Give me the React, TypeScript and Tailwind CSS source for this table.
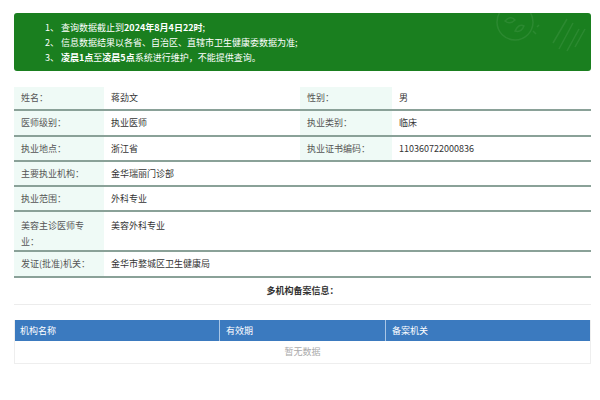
import React from "react";

const FONT = { fontFamily: '"Noto Sans CJK SC", "Noto Sans", sans-serif' };

function Label({ children, className = "" }: { children: React.ReactNode; className?: string }) {
  return (
    <div className={`bg-[#effaf6] text-[#555] px-[7px] ${className}`}>{children}</div>
  );
}

export default function App() {
  const rowCls = "flex border-b-2 border-[#8aa198] text-[9px] leading-[16px]";
  return (
    <div className="w-[600px] h-[400px] bg-white overflow-hidden" style={FONT}>
      <div className="pt-[13px] pl-[14px] w-[591px]">
        {/* Banner */}
        <div className="relative h-[58px] rounded-[3px] bg-[#1a7f1f] text-white text-[9px] leading-[15px] pl-[31px] pt-[7px] overflow-hidden">
          <div>1、 查询数据截止到<span className="font-bold">2024年8月4日22时</span>;</div>
          <div>2、 信息数据结果以各省、自治区、直辖市卫生健康委数据为准;</div>
          <div>
            3、 <span className="font-bold">凌晨1点</span>至<span className="font-bold">凌晨5点</span>系统进行维护，不能提供查询。
          </div>
          <svg className="absolute right-0 top-0" width="100" height="58" viewBox="0 0 100 58" fill="none">
            <g stroke="#ffffff" strokeOpacity="0.08" strokeWidth="1.5">
              <circle cx="24" cy="9" r="18" />
              <path d="M14 8 q6 -6 10 -1 q-5 5 -10 1z" />
              <path d="M24 18 q4 -8 9 -5 q-3 7 -9 5z" />
              <path d="M42 18 l3 3 M46 14 l2 -2" />
              <path d="M62 30 l14 -24 M68 36 l14 -26 M76 38 l12 -22 M84 34 l10 -18" />
            </g>
          </svg>
        </div>

        {/* Info table */}
        <div className="mt-[16px] text-[#333]">
          <div className={`${rowCls} h-[24px]`}>
            <Label className="w-[90px] flex items-center">姓名：</Label>
            <div className="w-[196px] px-[7px] flex items-center">蒋劲文</div>
            <Label className="w-[92px] flex items-center">性别：</Label>
            <div className="flex-1 px-[7px] flex items-center">男</div>
          </div>
          <div className={`${rowCls} h-[26px]`}>
            <Label className="w-[90px] flex items-center">医师级别：</Label>
            <div className="w-[196px] px-[7px] flex items-center">执业医师</div>
            <Label className="w-[92px] flex items-center">执业类别：</Label>
            <div className="flex-1 px-[7px] flex items-center">临床</div>
          </div>
          <div className={`${rowCls} h-[25px]`}>
            <Label className="w-[90px] flex items-center">执业地点：</Label>
            <div className="w-[196px] px-[7px] flex items-center">浙江省</div>
            <Label className="w-[92px] flex items-center">执业证书编码：</Label>
            <div className="flex-1 px-[7px] flex items-center">110360722000836</div>
          </div>
          <div className={`${rowCls} h-[25px]`}>
            <Label className="w-[90px] flex items-center">主要执业机构：</Label>
            <div className="flex-1 px-[7px] flex items-center">金华瑞丽门诊部</div>
          </div>
          <div className={`${rowCls} h-[25px]`}>
            <Label className="w-[90px] flex items-center">执业范围：</Label>
            <div className="flex-1 px-[7px] flex items-center">外科专业</div>
          </div>
          <div className={`${rowCls} h-[40px]`}>
            <Label className="w-[90px] pt-[6px]">美容主诊医师专业：</Label>
            <div className="flex-1 px-[7px] pt-[6px]">美容外科专业</div>
          </div>
          <div className={`${rowCls} h-[26px]`}>
            <Label className="w-[90px] flex items-center">发证(批准)机关：</Label>
            <div className="flex-1 px-[7px] flex items-center">金华市婺城区卫生健康局</div>
          </div>
        </div>

        {/* Multi-institution */}
        <div className="h-[27px] flex items-center justify-center border-b border-[#ececec] text-[9px] font-bold text-[#333]">
          多机构备案信息：
        </div>

        <div className="mt-[15px] border-x border-b border-[#eeeeee] text-[9px]">
          <div className="flex h-[21px] bg-[#3b7abf] text-white">
            <div className="w-[205px] px-[5px] flex items-center border-r border-[#a9c6e6]">机构名称</div>
            <div className="w-[166px] px-[6px] flex items-center border-r border-[#a9c6e6]">有效期</div>
            <div className="flex-1 px-[6px] flex items-center">备案机关</div>
          </div>
          <div className="h-[22px] flex items-center justify-center text-[#aaa]">暂无数据</div>
        </div>
      </div>
    </div>
  );
}
